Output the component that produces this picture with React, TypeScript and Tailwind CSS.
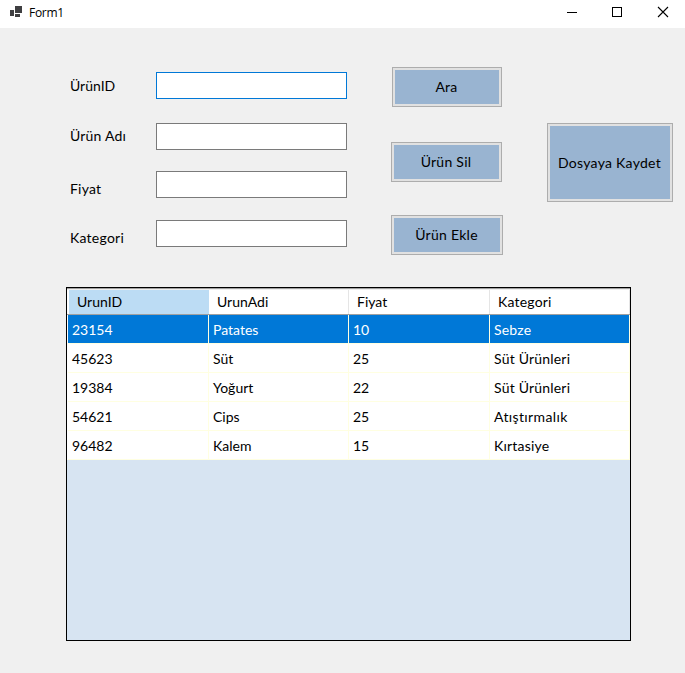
import type { ReactNode } from "react";

const rows = [
  ["23154", "Patates", "10", "Sebze"],
  ["45623", "Süt", "25", "Süt Ürünleri"],
  ["19384", "Yoğurt", "22", "Süt Ürünleri"],
  ["54621", "Cips", "25", "Atıştırmalık"],
  ["96482", "Kalem", "15", "Kırtasiye"],
];

const gridColumns = "grid grid-cols-[141px_140px_141px_140px]";

function TitleBar() {
  return (
    <header className="flex h-7 items-center bg-white">
      <svg className="mb-1 ml-2.5 h-3 w-3" viewBox="0 0 12 12" fill="#3f3f41" shapeRendering="crispEdges">
        <path d="M5 0h7v7H5zM0 4h4v6H0zM5 8h5v3H5z" />
      </svg>
      <span className="ml-[7px] pb-[3px] font-['Open_Sans','Noto_Sans',sans-serif] text-[12px] leading-[25px] tracking-[-0.3px] text-black">
        Form1
      </span>
      <svg
        className="ml-auto h-7 w-[125px]"
        viewBox="0 0 125 28"
        fill="none"
        stroke="#000"
        shapeRendering="crispEdges"
      >
        <path d="M7 12.5h10" />
        <rect x="52.5" y="7.5" width="9" height="9" />
        <path d="M98 7l10 10M108 7l-10 10" strokeWidth="1.1" shapeRendering="auto" />
      </svg>
    </header>
  );
}

function Button({ children, className }: { children: ReactNode; className: string }) {
  return (
    <button className={`border border-[#adadad] bg-[#e1e1e1] p-0.5 tracking-[0.27px] ${className}`}>
      <span className="flex h-full w-full items-center justify-center whitespace-nowrap bg-[#99b4d1] pr-px pb-px">
        {children}
      </span>
    </button>
  );
}

function Field({ focused = false, className = "" }: { focused?: boolean; className?: string }) {
  return (
    <input
      className={`block h-[27px] w-[191px] border bg-white px-1 outline-none ${
        focused ? "border-[#0078d7]" : "border-[#7a7a7a]"
      } ${className}`}
    />
  );
}

function DataGrid() {
  return (
    <section className="ml-[66px] h-[354px] w-[565px] border border-black bg-[#d7e4f2]">
      <div className="h-px bg-[#a0a0a0]" />
      <div className="h-px bg-[#efefef]" />
      <div className={`${gridColumns} h-[25px] border-b border-[#a0a0a0] bg-white pl-px leading-6`}>
        <div className="ml-px bg-[#bcdcf4] pl-2">UrunID</div>
        <div className="border-r border-[#e5e5e5] pl-2">UrunAdi</div>
        <div className="border-r border-[#e5e5e5] pl-2">Fiyat</div>
        <div className="border-r border-[#e5e5e5] pl-2 tracking-[0.2px]">Kategori</div>
      </div>
      {rows.map((row, index) => (
        <div key={row[0]} className={`${gridColumns} grid-rows-[29px] bg-white pl-px leading-[30px]`}>
          {row.map((cell, column) => (
            <div
              key={column}
              className={`h-[29px] border-r border-b border-[#ffffe1] pl-1 ${
                column === 3 ? (index === 3 ? "tracking-[0.37px]" : "tracking-[0.2px]") : ""
              } ${index === 0 ? "bg-[#0078d7] text-white" : ""}`}
            >
              {cell}
            </div>
          ))}
        </div>
      ))}
    </section>
  );
}

export default function App() {
  return (
    <div className="h-[673px] w-[685px] overflow-hidden bg-[#f0f0f0] font-[Lato,sans-serif] text-[14px] text-black">
      <TitleBar />
      <main>
        <div className="flex h-[259px]">
          <div className="flex w-[156px] shrink-0 flex-col pt-[48px] pl-[70px] leading-5 whitespace-nowrap">
            <span>ÜrünID</span>
            <span className="mt-[30px] tracking-[0.2px]">Ürün Adı</span>
            <span className="mt-[33px] tracking-[0.2px]">Fiyat</span>
            <span className="mt-[29px] tracking-[0.25px]">Kategori</span>
          </div>
          <div className="w-[235px] shrink-0 pt-[44px]">
            <Field focused />
            <Field className="mt-6" />
            <Field className="mt-[21px]" />
            <Field className="mt-[22px]" />
          </div>
          <div className="flex w-[156px] shrink-0 flex-col items-start pt-[39px]">
            <Button className="ml-px h-10 w-[110px]">Ara</Button>
            <Button className="mt-[35px] h-10 w-[111px]">Ürün Sil</Button>
            <Button className="mt-[33px] h-10 w-[112px]">Ürün Ekle</Button>
          </div>
          <div className="shrink-0 pt-[95px]">
            <Button className="h-[79px] w-[126px]">Dosyaya Kaydet</Button>
          </div>
        </div>
        <DataGrid />
      </main>
    </div>
  );
}
